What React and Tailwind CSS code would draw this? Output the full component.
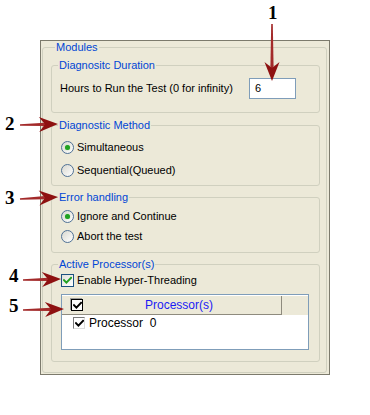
import React from "react";

const Check = ({ color = "#000", className = "" }) => (
  <svg className={className} width="9" height="9" viewBox="0 0 9 9" fill="none">
    <path d="M1 4.2 L3.4 6.6 L8 1.8" stroke={color} strokeWidth="2" strokeLinecap="square" />
  </svg>
);

const Radio = ({ checked, label }) => (
  <div className="flex items-center h-[13px]">
    <div className="w-[13px] h-[13px] rounded-full border border-[#4f7196] bg-gradient-to-br from-[#d8d8d0] to-white flex items-center justify-center">
      {checked && <div className="w-[5px] h-[5px] rounded-full bg-[#21a121] shadow-[0_0_1px_#6ed66e]"></div>}
    </div>
    <span className="ml-[3px]">{label}</span>
  </div>
);

const GroupBox = ({ title, className = "", children }) => (
  <fieldset className={`w-[269px] border border-[#d0d0bf] rounded-[3px] ${className}`}>
    <legend className="ml-[6px] px-[1px] leading-[13px] text-[#0046d5]">{title}</legend>
    {children}
  </fieldset>
);

const Arrow = ({ x1, y1, x2, y2 }) => {
  const dx = x2 - x1;
  const dy = y2 - y1;
  const len = Math.hypot(dx, dy);
  const ux = dx / len;
  const uy = dy / len;
  const px = -uy;
  const py = ux;
  const bx = x2 - ux * 19;
  const by = y2 - uy * 19;
  const nx = x2 - ux * 13;
  const ny = y2 - uy * 13;
  const head = [
    [x2, y2],
    [bx + px * 7.5, by + py * 7.5],
    [nx, ny],
    [bx - px * 7.5, by - py * 7.5],
  ]
    .map((p) => p.join(","))
    .join(" ");
  const shaft = [
    [x1 + px * 0.8, y1 + py * 0.8],
    [nx + px * 1.6, ny + py * 1.6],
    [nx - px * 1.6, ny - py * 1.6],
    [x1 - px * 0.8, y1 - py * 0.8],
  ]
    .map((p) => p.join(","))
    .join(" ");
  return (
    <g>
      <polygon points={shaft} fill="#a32a2a" />
      <polygon points={head} fill="#8e1111" />
    </g>
  );
};

const Num = ({ n, className }) => (
  <span className={`absolute font-['Liberation_Serif'] font-bold text-[19px] leading-none text-black ${className}`}>{n}</span>
);

export default function App() {
  return (
    <div className="relative w-[370px] h-[415px] bg-white font-['Liberation_Sans',Arial,sans-serif] text-[11px] text-black">
      <div className="pl-[40px] pt-[40px]">
        <div className="w-[290px] h-[335px] border border-[#7c7a6c] bg-[#ece9d8]">
          <fieldset className="ml-[1px] w-[285px] border border-[#d0d0bf] rounded-[3px] pl-[8px] pb-[10px]">
            <legend className="ml-[4px] px-[1px] leading-[13px] text-[#0046d5]">Modules</legend>

            <GroupBox title="Diagnositc Duration" className="mt-[5px]">
              <div className="flex items-center pl-[8px] pt-[6px] pb-[13px]">
                <span className="w-[189px]">Hours to Run the Test (0 for infinity)</span>
                <div className="w-[47px] h-[21px] border border-[#7f9db9] bg-white pl-[5px] flex items-center">6</div>
              </div>
            </GroupBox>

            <GroupBox title="Diagnostic Method" className="mt-[6px]">
              <div className="flex flex-col gap-[10px] pl-[9px] pt-[9px] pb-[8px]">
                <Radio checked label="Simultaneous" />
                <Radio label="Sequential(Queued)" />
              </div>
            </GroupBox>

            <GroupBox title="Error handling" className="mt-[5px]">
              <div className="flex flex-col gap-[7px] pl-[9px] pt-[6px] pb-[9px]">
                <Radio checked label="Ignore and Continue" />
                <Radio label="Abort the test" />
              </div>
            </GroupBox>

            <GroupBox title="Active Processor(s)" className="mt-[5px]">
              <div className="pl-[9px] pt-[3px] pb-[11px]">
                <div className="flex items-center h-[13px]">
                  <div className="w-[13px] h-[13px] border border-[#1c5180] bg-gradient-to-br from-[#e0e0da] to-white flex items-center justify-center">
                    <Check color="#21a121" />
                  </div>
                  <span className="ml-[3px]">Enable Hyper-Threading</span>
                </div>

                {/* processor list */}
                <div className="mt-[7px] w-[248px] h-[56px] border border-[#7f9db9] bg-white">
                  <div className="flex h-[20px] bg-[#ece9d8] border-t border-white">
                    <div className="w-[220px] flex items-center border-r border-b border-[#8e8b7e] pl-[9px]">
                      <div className="w-[12px] h-[12px] border border-black bg-white flex items-center justify-center shadow-[-1px_-1px_0_#9a9a9a]">
                        <Check />
                      </div>
                      <span className="flex-1 text-center text-[#1b1bf5] text-[12px] pr-[6px]">Processor(s)</span>
                    </div>
                  </div>
                  <div className="flex items-center h-[16px] pl-[11px]">
                    <div className="w-[12px] h-[12px] border-t border-l border-[#7a7a7a] border-b border-r border-b-[#dcdcdc] border-r-[#dcdcdc] bg-white flex items-center justify-center">
                      <Check />
                    </div>
                    <span className="ml-[4px] whitespace-pre text-[12px]">Processor  0</span>
                  </div>
                </div>
              </div>
            </GroupBox>
          </fieldset>
        </div>
      </div>

      {/* callouts */}
      <svg className="absolute inset-0 pointer-events-none" width="370" height="415" viewBox="0 0 370 415">
        <Arrow x1={272} y1={24} x2={272} y2={81} />
        <Arrow x1={20} y1={125} x2={58} y2={124} />
        <Arrow x1={20} y1={199} x2={58} y2={197} />
        <Arrow x1={23} y1={280} x2={61} y2={279} />
        <Arrow x1={23} y1={310} x2={64} y2={309} />
      </svg>
      <Num n="1" className="left-[268px] top-[3px]" />
      <Num n="2" className="left-[5px] top-[114px]" />
      <Num n="3" className="left-[5px] top-[188px]" />
      <Num n="4" className="left-[9px] top-[266px]" />
      <Num n="5" className="left-[9px] top-[296px]" />
    </div>
  );
}
